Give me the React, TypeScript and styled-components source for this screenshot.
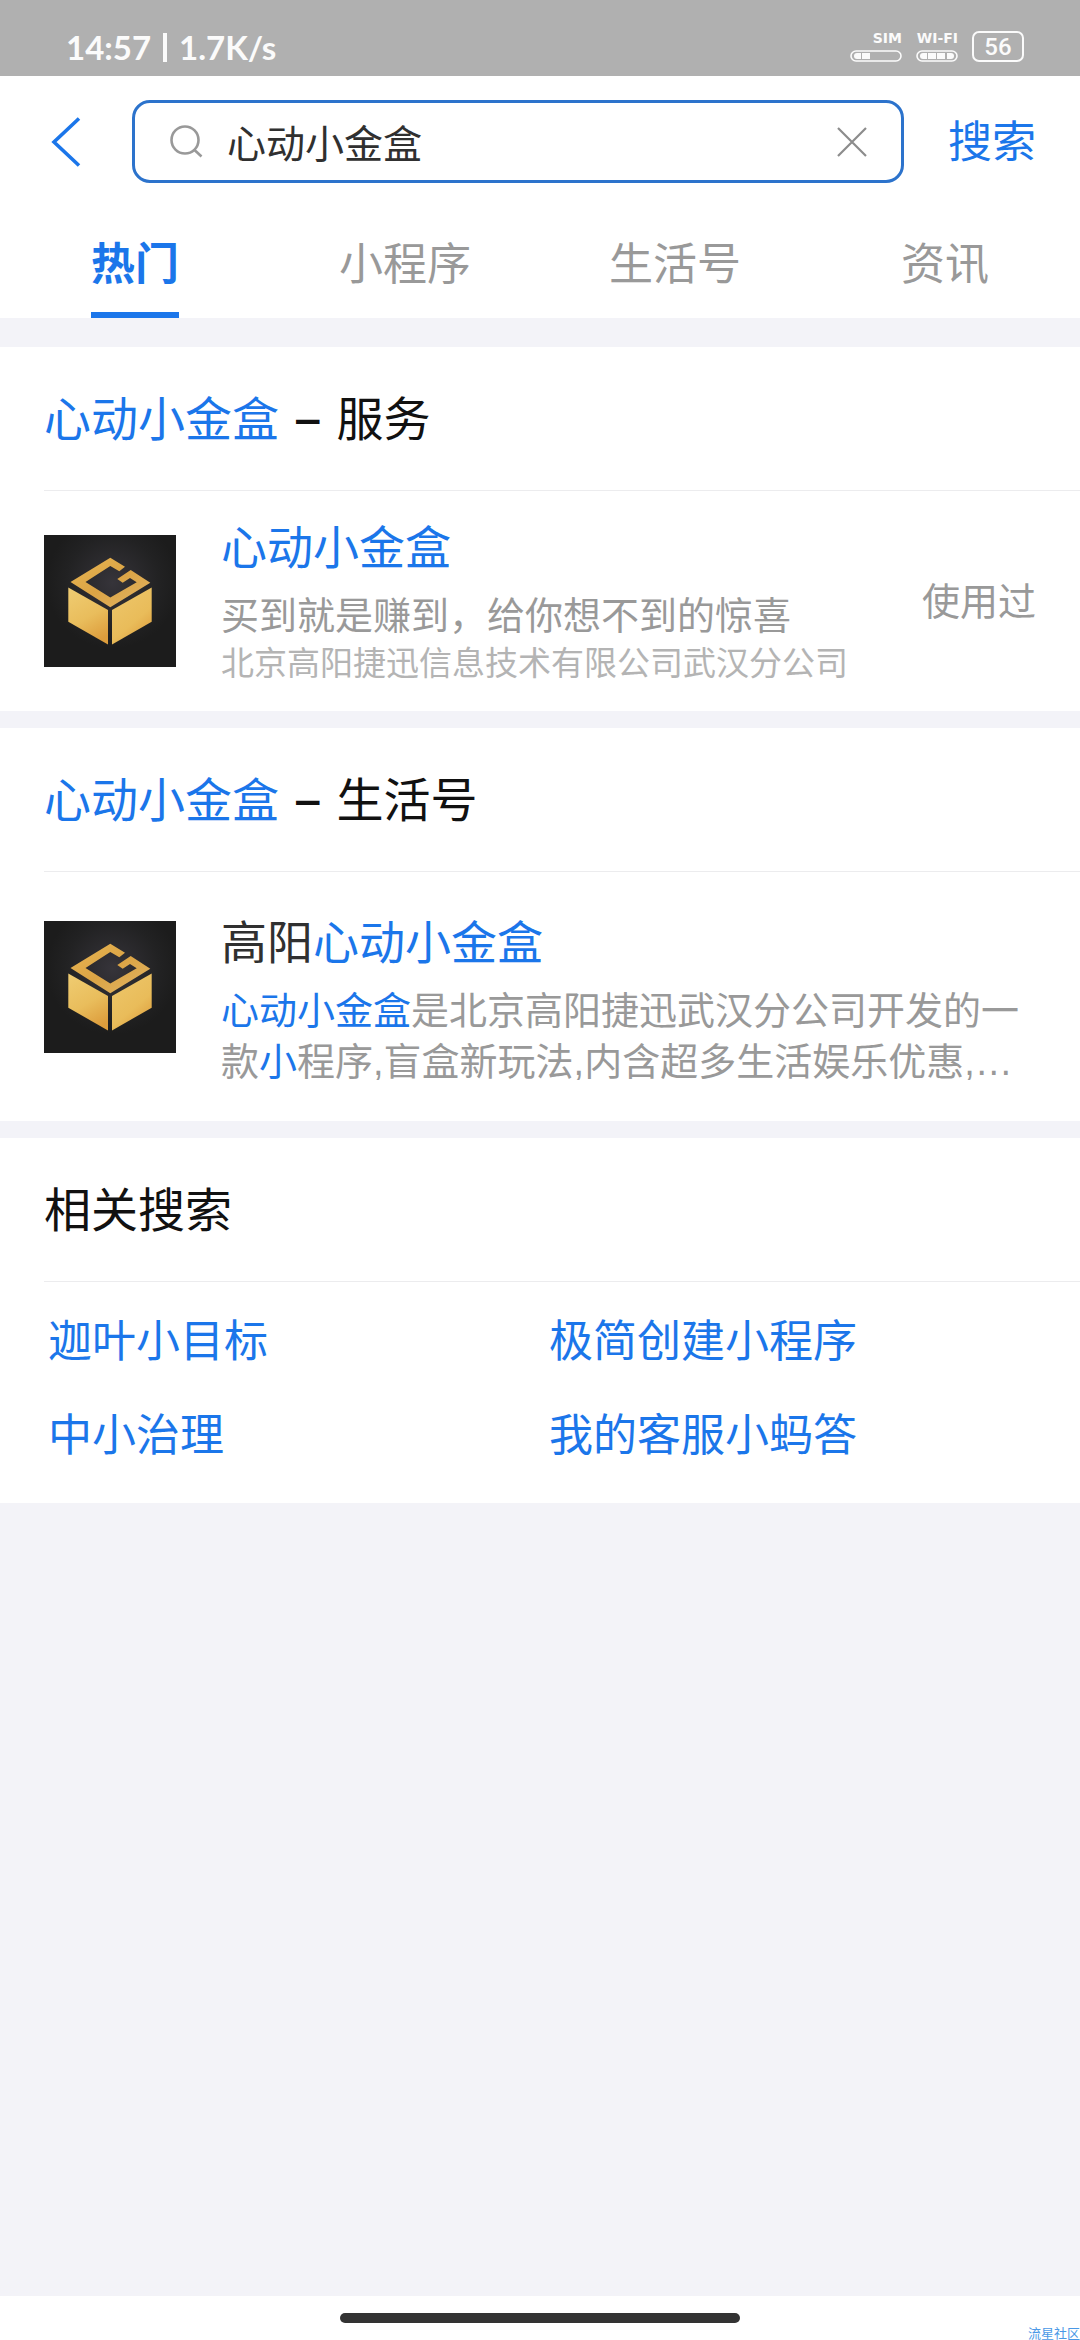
import React, { useState } from "react";
import styled, { createGlobalStyle } from "styled-components";

const BLUE = "#1b76ea";

const GlobalStyle = createGlobalStyle`
  * { box-sizing: border-box; }
  body {
    margin: 0;
    background: #f3f3f8;
    font-family: "Liberation Sans", "Noto Sans CJK SC", sans-serif;
  }
  button, input { font: inherit; color: inherit; border: 0; padding: 0; margin: 0; background: none; }
  button { cursor: pointer; }
  a { color: inherit; text-decoration: none; }
  h2, h3, p { margin: 0; font-weight: 400; }
  svg { display: block; }
`;

const Page = styled.div`
  position: relative;
  display: flex;
  flex-direction: column;
  min-height: 100vh;
  overflow: hidden;
`;

const StatusBar = styled.div`
  display: flex;
  align-items: flex-end;
  justify-content: space-between;
  height: 76px;
  padding: 0 56px 14px 66px;
  background: #b0b0b0;
  color: #fbfbfb;
`;

const Clock = styled.div`
  display: flex;
  align-items: center;
  gap: 12px;
  font-family: Lato, sans-serif;
  font-size: 33px;
  font-weight: 700;
  line-height: 29px;
`;

const ClockRule = styled.span`
  width: 4px;
  height: 29px;
  background: currentColor;
`;

const Indicators = styled.div`
  display: flex;
  align-items: flex-end;
  gap: 14px;
`;

const Signal = styled.div`
  display: flex;
  flex-direction: column;
  align-items: flex-end;
  gap: 5px;
  font-family: "DejaVu Sans", sans-serif;
  font-size: 14px;
  font-weight: 700;
  line-height: 14px;
`;

const Battery = styled.div`
  width: 52px;
  height: 31px;
  border: 2px solid currentColor;
  border-radius: 7px;
  font-family: Roboto, sans-serif;
  font-size: 24px;
  font-weight: 500;
  line-height: 28px;
  text-align: center;
`;

const Header = styled.header`
  background: #fff;
`;

const SearchRow = styled.form`
  display: flex;
  align-items: center;
  gap: 44px;
  padding: 24px 44px 25px;
`;

const IconButton = styled.button`
  flex: none;
`;

const SearchBox = styled.label`
  display: flex;
  flex: 1;
  align-items: center;
  gap: 24px;
  min-width: 0;
  height: 83px;
  padding: 0 34px;
  border: 3px solid #2c73cc;
  border-radius: 18px;
`;

const SearchInput = styled.input`
  flex: 1;
  min-width: 0;
  height: 60px;
  padding-bottom: 2px;
  outline: none;
  color: #303030;
  font-size: 39px;
`;

const SubmitButton = styled.button`
  padding-top: 3px;
  color: ${BLUE};
  font-size: 44px;
  line-height: 60px;
`;

const Tabs = styled.nav`
  display: grid;
  grid-template-columns: repeat(4, 1fr);
`;

const Tab = styled.button<{ $active: boolean }>`
  display: flex;
  justify-content: center;
  color: ${(p) => (p.$active ? BLUE : "#999")};
  font-size: 44px;
  font-weight: ${(p) => (p.$active ? 700 : 400)};

  span {
    padding-top: 10px;
    border-bottom: 6px solid ${(p) => (p.$active ? BLUE : "transparent")};
    line-height: 94px;
  }
`;

const Results = styled.main`
  display: flex;
  flex-direction: column;
  flex: 1;
  gap: 17px;
  padding-top: 29px;
`;

const Section = styled.section`
  background: #fff;
`;

const SectionTitle = styled.h2`
  margin-left: 44px;
  padding-top: 3px;
  border-bottom: 1px solid #ececee;
  color: #111;
  font-size: 47px;
  line-height: 140px;
`;

const Dash = styled.span`
  margin: 0 4px;
  font-family: Inter, sans-serif;
  font-weight: 500;
  line-height: 1;
`;

const Mark = styled.span`
  color: ${BLUE};
`;

const ResultLink = styled.a<{ $tall?: boolean }>`
  display: flex;
  align-items: ${(p) => (p.$tall ? "flex-start" : "center")};
  gap: 45px;
  padding: ${(p) => (p.$tall ? "39px 44px 33px" : "25px 44px 26px")};

  > svg {
    flex: none;
    margin-top: ${(p) => (p.$tall ? 10 : 0)}px;
  }
`;

const ResultText = styled.div`
  flex: 1;
  min-width: 0;
  padding-top: 2px;
`;

const ResultTitle = styled.h3`
  margin-bottom: 13px;
  color: #303030;
  font-size: 46px;
  line-height: 60px;
`;

const Description = styled.p`
  color: #999;
  font-size: 38px;
  line-height: 51px;
`;

const Company = styled.p`
  color: #b4b4b4;
  font-size: 33px;
  line-height: 43px;
`;

const Used = styled.span`
  padding-top: 4px;
  color: #999;
  font-size: 38px;
  line-height: 51px;
`;

const Related = styled.div`
  display: grid;
  grid-template-columns: 1fr 1fr;
  column-gap: 18px;
  padding: 13px 48px 20px;
`;

const RelatedLink = styled.a`
  color: ${BLUE};
  font-size: 44px;
  line-height: 94px;
`;

const HomeBar = styled.footer`
  display: flex;
  justify-content: center;
  padding: 17px 0;
  background: #fff;
`;

const HomeHandle = styled.span`
  width: 37%;
  height: 10px;
  border-radius: 5px;
  background: #333;
`;

const Watermark = styled.span`
  position: absolute;
  right: 0;
  bottom: 0;
  color: #4a98e6;
  font-size: 13px;
  line-height: 13px;
`;

function BoxLogo() {
  return (
    <svg width="132" height="132" viewBox="0 0 132 132" aria-hidden="true">
      <defs>
        <radialGradient id="glow" cx="0.52" cy="0.36" r="0.5">
          <stop offset="0" stopColor="#36343a" />
          <stop offset="0.7" stopColor="#222223" />
          <stop offset="1" stopColor="#1c1c1c" />
        </radialGradient>
        <linearGradient id="lid" x1="0" y1="0" x2="1" y2="1">
          <stop offset="0" stopColor="#e8b653" />
          <stop offset="0.5" stopColor="#dba445" />
          <stop offset="1" stopColor="#e2b565" />
        </linearGradient>
        <linearGradient id="left" x1="0.2" y1="0" x2="0.6" y2="1">
          <stop offset="0" stopColor="#efcb70" />
          <stop offset="0.55" stopColor="#e9bd5c" />
          <stop offset="1" stopColor="#dd9d3c" />
        </linearGradient>
        <linearGradient id="right" x1="0.2" y1="0" x2="0.8" y2="1">
          <stop offset="0" stopColor="#edc66a" />
          <stop offset="0.6" stopColor="#e9bc5a" />
          <stop offset="1" stopColor="#dc9b3b" />
        </linearGradient>
      </defs>
      <rect width="132" height="132" fill="url(#glow)" />
      <path
        d="M66.3 22.7 81 31.7 75.3 36.3 66.3 31 41.5 47 66.3 62.6 92.7 47.3 86 43 78.7 47.8 73.3 44 86.7 35 106.3 47.7 66.3 72.3 26.5 47Z"
        fill="url(#lid)"
      />
      <path d="M24.3 52.5 64 75V109.5L24.3 86.7Z" fill="url(#left)" />
      <path d="M68 75 107.7 52.5V86.7L68 109.5Z" fill="url(#right)" />
    </svg>
  );
}

function SignalPill({ width, cells }: { width: number; cells: number }) {
  return (
    <svg width={width} height="12" viewBox={`0 0 ${width} 12`} fill="currentColor" aria-hidden="true">
      <rect x="1" y="1" width={width - 2} height="10" rx="5" fill="none" stroke="currentColor" strokeWidth="1.6" />
      {Array.from({ length: cells }, (_, i) =>
        i === 0 ? (
          <path key={i} d="M11 3H7a3 3 0 0 0 0 6h4Z" />
        ) : i === 3 ? (
          <path key={i} d="M31 3h4a3 3 0 0 1 0 6h-4Z" />
        ) : (
          <rect key={i} x={3 + i * 9} y="3" width="8" height="6" />
        ),
      )}
    </svg>
  );
}

const TABS = ["热门", "小程序", "生活号", "资讯"];
const RELATED = ["迦叶小目标", "极简创建小程序", "中小治理", "我的客服小蚂答"];

export default function App() {
  const [query, setQuery] = useState("心动小金盒");
  const [active, setActive] = useState(TABS[0]);

  return (
    <Page>
      <GlobalStyle />
      <StatusBar>
        <Clock>
          <span>14:57</span>
          <ClockRule />
          <span>1.7K/s</span>
        </Clock>
        <Indicators>
          <Signal>
            SIM
            <SignalPill width={52} cells={2} />
          </Signal>
          <Signal>
            WI-FI
            <SignalPill width={42} cells={4} />
          </Signal>
          <Battery>56</Battery>
        </Indicators>
      </StatusBar>

      <Header>
        <SearchRow onSubmit={(e) => e.preventDefault()}>
          <IconButton type="button" aria-label="返回">
            <svg width="44" height="52" viewBox="0 0 44 52" fill="none" stroke={BLUE} strokeWidth="3.6">
              <path d="M35 2.5 10 26 35 49.5" />
            </svg>
          </IconButton>
          <SearchBox>
            <svg width="34" height="34" viewBox="0 0 34 34" fill="none" stroke="#999" strokeWidth="2.6" aria-hidden="true">
              <circle cx="16" cy="15" r="13.5" />
              <path d="M25.5 25 32.5 31.5" />
            </svg>
            <SearchInput
              type="text"
              aria-label="搜索内容"
              value={query}
              onChange={(e) => setQuery(e.target.value)}
            />
            <IconButton type="button" aria-label="清除" onClick={() => setQuery("")}>
              <svg width="30" height="30" viewBox="0 0 30 30" fill="none" stroke="#8c8c8c" strokeWidth="2.2">
                <path d="M1 1 29 29M29 1 1 29" />
              </svg>
            </IconButton>
          </SearchBox>
          <SubmitButton type="submit">搜索</SubmitButton>
        </SearchRow>
        <Tabs>
          {TABS.map((name) => (
            <Tab key={name} type="button" $active={name === active} onClick={() => setActive(name)}>
              <span>{name}</span>
            </Tab>
          ))}
        </Tabs>
      </Header>

      <Results>
        <Section>
          <SectionTitle>
            <Mark>心动小金盒</Mark> <Dash>–</Dash> 服务
          </SectionTitle>
          <ResultLink href="#service">
            <BoxLogo />
            <ResultText>
              <ResultTitle>
                <Mark>心动小金盒</Mark>
              </ResultTitle>
              <Description>买到就是赚到，给你想不到的惊喜</Description>
              <Company>北京高阳捷迅信息技术有限公司武汉分公司</Company>
            </ResultText>
            <Used>使用过</Used>
          </ResultLink>
        </Section>

        <Section>
          <SectionTitle>
            <Mark>心动小金盒</Mark> <Dash>–</Dash> 生活号
          </SectionTitle>
          <ResultLink href="#account" $tall>
            <BoxLogo />
            <ResultText>
              <ResultTitle>
                高阳<Mark>心动小金盒</Mark>
              </ResultTitle>
              <Description>
                <Mark>心动小金盒</Mark>是北京高阳捷迅武汉分公司开发的一款<Mark>小</Mark>
                程序,盲盒新玩法,内含超多生活娱乐优惠,…
              </Description>
            </ResultText>
          </ResultLink>
        </Section>

        <Section>
          <SectionTitle>相关搜索</SectionTitle>
          <Related>
            {RELATED.map((name) => (
              <RelatedLink key={name} href={`#${name}`}>
                {name}
              </RelatedLink>
            ))}
          </Related>
        </Section>
      </Results>

      <HomeBar>
        <HomeHandle />
      </HomeBar>
      <Watermark>流星社区</Watermark>
    </Page>
  );
}
